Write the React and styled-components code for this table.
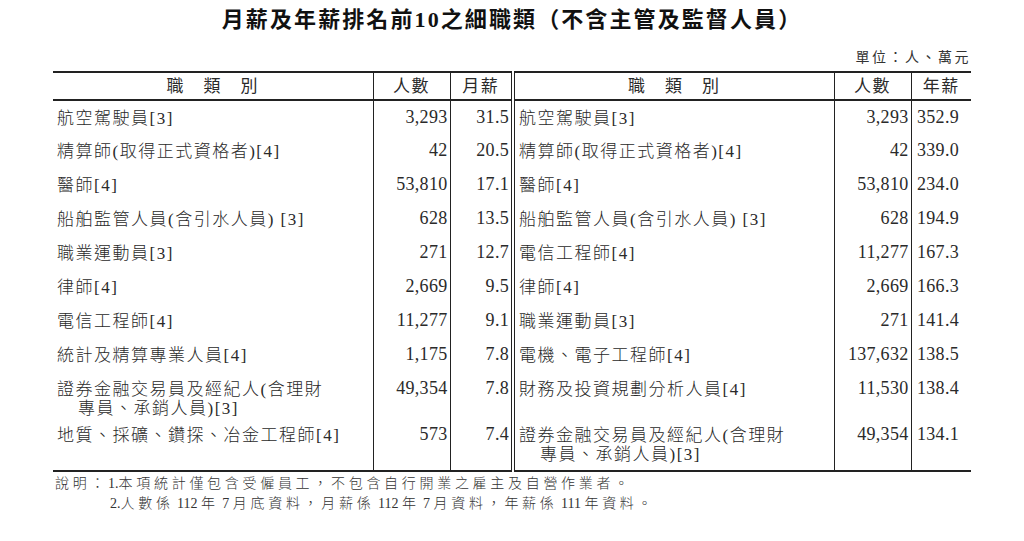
import React from 'react';
import styled, { createGlobalStyle } from 'styled-components';

const GlobalStyle = createGlobalStyle`
  body {
    margin: 0;
    background: #fff;
    color: #222;
    font-family: "Liberation Serif", "Noto Sans CJK TC", serif;
  }
`;

const Page = styled.div`
  width: 918px;
  padding: 6px 0 0 53px;
`;

const Title = styled.h1`
  margin: 0;
  text-align: center;
  font-size: 22px;
  line-height: 28px;
  font-weight: 700;
  letter-spacing: 2.1px;
  color: #111;
`;

const Unit = styled.div`
  margin-top: 14px;
  text-align: right;
  font-size: 14px;
  line-height: 20px;
  letter-spacing: 2.5px;
  color: #333;
`;

const Table = styled.table`
  margin-top: 3px;
  width: 918px;
  table-layout: fixed;
  border-collapse: collapse;
  border-top: 2px solid #222;
  border-bottom: 2px solid #222;
  font-size: 17px;
  line-height: 19px;
  letter-spacing: 1.5px;
  color: #2a2a2a;
`;

const HeadRow = styled.tr`
  height: 28px;
  border-bottom: 2px solid #222;
`;

const Row = styled.tr`
  height: ${p => p.$h}px;
`;

const HeadCell = styled.th`
  font-weight: 400;
  text-align: center;
  vertical-align: middle;
  padding: 0;
  border-left: ${p => (p.$double ? '4px double #222' : p.$first ? 'none' : '1px solid #222')};
`;

const NameCell = styled.td`
  vertical-align: top;
  padding: 8px 0 0 ${p => (p.$hang ? 25 : 4)}px;
  text-indent: ${p => (p.$hang ? -21 : 0)}px;
  font-weight: 300;
  border-left: ${p => (p.$double ? '4px double #222' : 'none')};
`;

const NumCell = styled.td`
  vertical-align: top;
  text-align: right;
  padding: 7px ${p => p.$pr || 2}px 0 0;
  font-size: 18px;
  letter-spacing: 0.3px;
  border-left: 1px solid #222;
`;

const Notes = styled.div`
  margin-top: 2px;
  font-size: 14px;
  line-height: 20px;
  letter-spacing: 3.7px;
  font-weight: 300;
  color: #333;
`;

const NoteLine = styled.div`
  padding-left: ${p => p.$indent || 2}px;
`;

const Num = styled.span`
  letter-spacing: 0;
`;

const rows = [
  { h: 34, l: ['航空駕駛員[3]', '3,293', '31.5'], r: ['航空駕駛員[3]', '3,293', '352.9'] },
  { h: 34, l: ['精算師(取得正式資格者)[4]', '42', '20.5'], r: ['精算師(取得正式資格者)[4]', '42', '339.0'] },
  { h: 34, l: ['醫師[4]', '53,810', '17.1'], r: ['醫師[4]', '53,810', '234.0'] },
  { h: 34, l: ['船舶監管人員(含引水人員) [3]', '628', '13.5'], r: ['船舶監管人員(含引水人員) [3]', '628', '194.9'] },
  { h: 34, l: ['職業運動員[3]', '271', '12.7'], r: ['電信工程師[4]', '11,277', '167.3'] },
  { h: 34, l: ['律師[4]', '2,669', '9.5'], r: ['律師[4]', '2,669', '166.3'] },
  { h: 34, l: ['電信工程師[4]', '11,277', '9.1'], r: ['職業運動員[3]', '271', '141.4'] },
  { h: 34, l: ['統計及精算專業人員[4]', '1,175', '7.8'], r: ['電機、電子工程師[4]', '137,632', '138.5'] },
  {
    h: 46,
    l: [['證券金融交易員及經紀人(含理財', '專員、承銷人員)[3]'], '49,354', '7.8'],
    r: ['財務及投資規劃分析人員[4]', '11,530', '138.4'],
  },
  {
    h: 53,
    l: ['地質、採礦、鑽探、冶金工程師[4]', '573', '7.4'],
    r: [['證券金融交易員及經紀人(含理財', '專員、承銷人員)[3]'], '49,354', '134.1'],
  },
];

function Name({ value, double }) {
  if (Array.isArray(value)) {
    return (
      <NameCell $hang $double={double}>
        {value[0]}
        <br />
        {value[1]}
      </NameCell>
    );
  }
  return <NameCell $double={double}>{value}</NameCell>;
}

function App() {
  return (
    <Page>
      <GlobalStyle />
      <Title>月薪及年薪排名前10之細職類（不含主管及監督人員）</Title>
      <Unit>單位：人、萬元</Unit>
      <Table>
        <colgroup>
          <col style={{ width: 320 }} />
          <col style={{ width: 77 }} />
          <col style={{ width: 63 }} />
          <col style={{ width: 321 }} />
          <col style={{ width: 77 }} />
          <col style={{ width: 60 }} />
        </colgroup>
        <thead>
          <HeadRow>
            <HeadCell $first>職　類　別</HeadCell>
            <HeadCell>人數</HeadCell>
            <HeadCell>月薪</HeadCell>
            <HeadCell $double>職　類　別</HeadCell>
            <HeadCell>人數</HeadCell>
            <HeadCell>年薪</HeadCell>
          </HeadRow>
        </thead>
        <tbody>
          {rows.map((row, i) => (
            <Row key={i} $h={row.h}>
              <Name value={row.l[0]} />
              <NumCell>{row.l[1]}</NumCell>
              <NumCell>{row.l[2]}</NumCell>
              <Name value={row.r[0]} double />
              <NumCell>{row.r[1]}</NumCell>
              <NumCell $pr={12}>{row.r[2]}</NumCell>
            </Row>
          ))}
        </tbody>
      </Table>
      <Notes>
        <NoteLine>說明：<Num>1.</Num>本項統計僅包含受僱員工，不包含自行開業之雇主及自營作業者。</NoteLine>
        <NoteLine $indent={57}>
          <Num>2.</Num>人數係<Num> 112 </Num>年<Num> 7 </Num>月底資料，月薪係<Num> 112 </Num>年<Num> 7 </Num>月資料，年薪係<Num> 111 </Num>年資料。
        </NoteLine>
      </Notes>
    </Page>
  );
}

export default App;
